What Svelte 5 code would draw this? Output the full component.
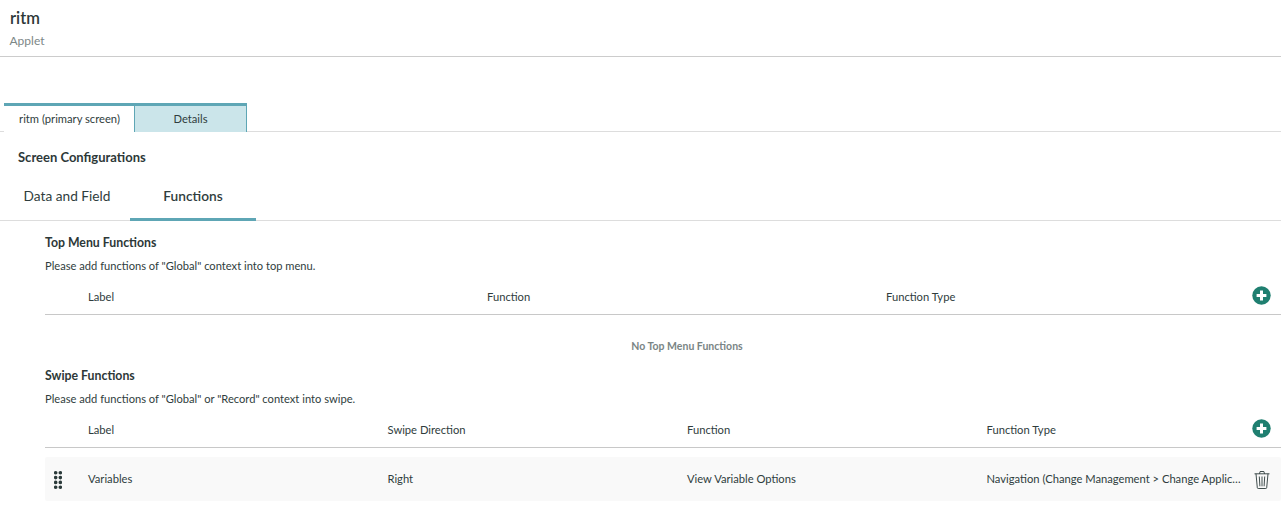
<script>
	const topColumns = ['Label', 'Function', 'Function Type'];
	const swipeColumns = ['Label', 'Swipe Direction', 'Function', 'Function Type'];
	const swipeRows = [
		{
			label: 'Variables',
			direction: 'Right',
			fn: 'View Variable Options',
			type: 'Navigation (Change Management > Change Application Variables)'
		}
	];
</script>

{#snippet plus()}
	<button class="add" aria-label="Add">
		<svg width="19" height="19" viewBox="0 0 19 19">
			<circle cx="9.5" cy="9.5" r="9.2" fill="#1f7f70" />
			<path d="M9.5 4.6v9.8M4.6 9.5h9.8" stroke="#fff" stroke-width="3" />
		</svg>
	</button>
{/snippet}

<div class="page">
	<header class="head">
		<h1>ritm</h1>
		<p>Applet</p>
	</header>

	<nav class="screen-tabs">
		<div class="screen-tab active">ritm (primary screen)</div>
		<div class="screen-tab">Details</div>
	</nav>

	<h2 class="screen-title">Screen Configurations</h2>

	<nav class="sub-tabs">
		<div class="sub-tab first">Data and Field</div>
		<div class="sub-tab active">Functions</div>
	</nav>

	<section class="content">
		<h3>Top Menu Functions</h3>
		<p class="hint">Please add functions of "Global" context into top menu.</p>
		<div class="row-head three">
			<span></span>
			{#each topColumns as col}
				<span>{col}</span>
			{/each}
			{@render plus()}
		</div>
		<div class="empty">No Top Menu Functions</div>

		<h3>Swipe Functions</h3>
		<p class="hint">Please add functions of "Global" or "Record" context into swipe.</p>
		<div class="row-head four">
			<span></span>
			{#each swipeColumns as col}
				<span>{col}</span>
			{/each}
			{@render plus()}
		</div>
		{#each swipeRows as row}
			<div class="row four">
				<svg class="grip" width="8" height="18" viewBox="0 0 8 18" aria-hidden="true">
					{#each [1.7, 6.3] as x}
						{#each [1.8, 6.6, 11.4, 16.2] as y}
							<circle cx={x} cy={y} r="1.8" fill="#2b3a3a" />
						{/each}
					{/each}
				</svg>
				<span>{row.label}</span>
				<span>{row.direction}</span>
				<span>{row.fn}</span>
				<span class="clip">{row.type}</span>
				<svg class="trash" width="16" height="18" viewBox="0 0 16 18" fill="none" stroke="#2b3a3a" stroke-width="0.9" aria-hidden="true">
					<path d="M.5 2.8h15M5.5 2.8l.6-2.3h3.8l.6 2.3" />
					<path d="M2 2.8l1.3 13.9c0 .5.4.8.9.8h7.6c.5 0 .9-.3.9-.8L14 2.8" />
					<path d="M5.3 5.5l.6 9.8M8 5.5v9.8M10.7 5.5l-.6 9.8" />
				</svg>
			</div>
		{/each}
	</section>
</div>

<style>
	:global(body) {
		margin: 0;
		background: #fff;
	}

	.page {
		font-family: 'Lato', 'Noto Sans', sans-serif;
		color: #2f3d3d;
		font-size: 11.2px;
	}

	.head {
		height: 47px;
		padding: 9px 10px 0;
		border-bottom: 1px solid #ccc;
	}

	h1 {
		margin: 0;
		font-size: 16.5px;
		font-weight: 600;
		line-height: 19px;
		color: #2d3838;
	}

	.head p {
		margin: 5px 0 0 -0.5px;
		font-size: 12px;
		line-height: 16px;
		color: #7d8787;
	}

	.screen-tabs {
		display: flex;
		margin-top: 46px;
		padding-left: 4px;
		height: 28px;
		border-bottom: 1px solid #ddd;
	}

	.screen-tab {
		box-sizing: border-box;
		height: 29px;
		border-top: 3px solid #5ea6b5;
		text-align: center;
		line-height: 26px;
	}

	.screen-tab.active {
		width: 130px;
		padding-left: 1px;
		background: #fff;
	}

	.screen-tab:not(.active) {
		width: 113px;
		background: #cbe5ea;
		border-left: 1px solid #5ea6b5;
		border-right: 1px solid #5ea6b5;
	}

	.screen-title {
		margin: 15px 0 0 18px;
		font-size: 13px;
		font-weight: 700;
		line-height: 20px;
		color: #2d3838;
	}

	.sub-tabs {
		display: flex;
		margin-top: 9px;
		padding-left: 4px;
		height: 44px;
		border-bottom: 1px solid #ddd;
	}

	.sub-tab {
		box-sizing: border-box;
		height: 45px;
		font-size: 13.7px;
		line-height: 40px;
		text-align: center;
	}

	.sub-tab.first {
		width: 126px;
	}

	.sub-tab.active {
		width: 126px;
		font-weight: 600;
		border-bottom: 3px solid #5ea6b5;
	}

	.content {
		padding: 14px 0 0 45px;
	}

	h3 {
		margin: 0;
		font-size: 12.3px;
		font-weight: 700;
		line-height: 16px;
		color: #2d3838;
	}

	.hint {
		margin: 7px 0 0;
		font-size: 11.15px;
		line-height: 15px;
	}

	.row-head,
	.row {
		display: grid;
		align-items: center;
	}

	.three {
		grid-template-columns: 43px 399px 399px 1fr 27px;
	}

	.four {
		grid-template-columns: 43px 299.5px 299.5px 299.5px 1fr 27px;
	}

	.row-head {
		height: 35px;
		margin-top: 6px;
		border-bottom: 1px solid #c8c8c8;
	}

	.empty {
		height: 53px;
		padding: 9px 0 0 48px;
		box-sizing: border-box;
		line-height: 44px;
		text-align: center;
		font-size: 10.5px;
		color: #7a8585;
		font-weight: 700;
	}

	.add {
		display: flex;
		padding: 0;
		border: 0;
		background: none;
		margin: 0 0 3px -2px;
	}

	.row {
		height: 44px;
		margin-top: 9px;
		background: #f9f9f9;
		border-radius: 2px;
	}

	.row span {
		margin-bottom: 2px;
	}

	.grip {
		margin: 1px 0 0 9px;
	}

	.clip {
		overflow: hidden;
		white-space: nowrap;
		text-overflow: ellipsis;
		margin-right: 12px;
	}

	.trash {
		margin-top: 1px;
	}
</style>
